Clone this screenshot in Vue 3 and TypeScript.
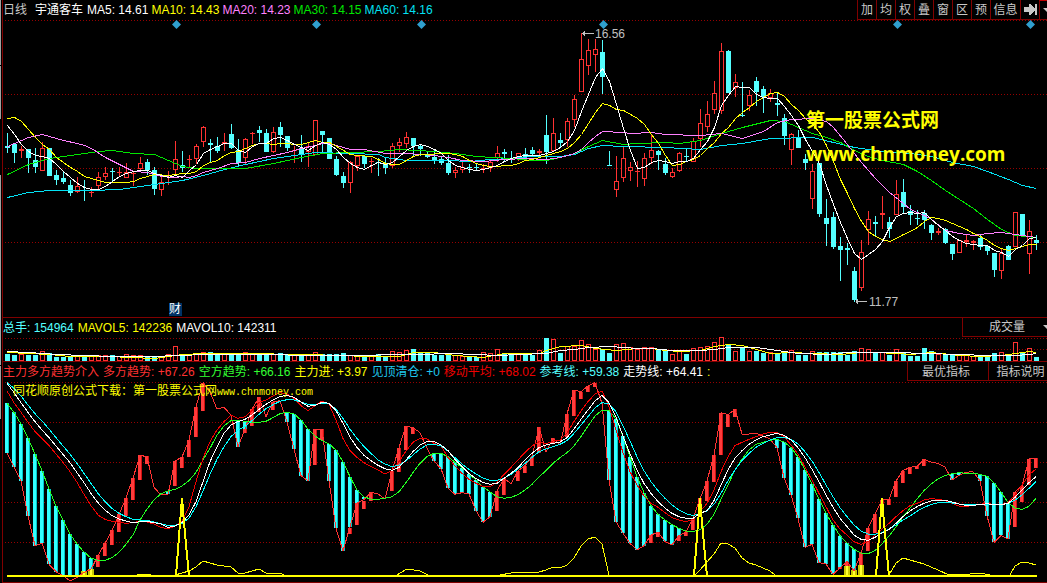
<script setup lang="ts">
type Candle = [kind: 0 | 1, high: number, top: number, bottom: number, low: number]
type Point = [number, number]

const STEP = 7
const WIDTH = 1047
const xAt = (i: number): number => STEP + STEP * i
const pct = (x: number): string => `${(x / WIDTH) * 100}%`

const tools: string[] = ['加', '均', '权', '叠', '窗', '区', '预', '信息']

const averages = [
  { label: 'MA5', value: '14.61', tone: 'white' },
  { label: 'MA10', value: '14.43', tone: 'yellow' },
  { label: 'MA20', value: '14.23', tone: 'violet' },
  { label: 'MA30', value: '14.15', tone: 'green' },
  { label: 'MA60', value: '14.16', tone: 'aqua' },
]

const indicatorReadings = [
  { label: '多方趋势', value: '+67.26', tone: 'red' },
  { label: '空方趋势', value: '+66.16', tone: 'lime' },
  { label: '主力进', value: '+3.97', tone: 'yellow' },
  { label: '见顶清仓', value: '+0', tone: 'sky' },
  { label: '移动平均', value: '+68.02', tone: 'crimson' },
  { label: '参考线', value: '+59.38', tone: 'cyan' },
  { label: '走势线', value: '+64.41', tone: 'white' },
]

/* 1 = rising (hollow red), 0 = falling (solid cyan); y values grow downwards */
const candles: Candle[] = [
  [0,133,146,148,153],[0,143,144,153,163],[1,146,149,151,158],[0,149,149,158,173],[0,148,160,167,173],
  [1,142,148,171,171],[0,148,148,176,176],[0,170,175,180,185],[0,172,178,182,184],[0,180,185,193,196],
  [1,177,186,192,193],[0,180,190,191,201],[1,187,192,193,197],[1,172,177,186,189],[1,167,173,177,180],
  [0,168,171,172,182],[1,167,172,173,177],[1,163,172,178,178],[1,171,173,174,186],[1,157,163,169,172],
  [0,159,162,170,175],[0,167,170,189,195],[1,177,182,190,196],[1,171,182,183,185],[1,141,159,170,175],
  [0,151,165,168,172],[1,155,159,160,168],[1,144,146,159,164],[1,126,127,142,147],[0,139,143,145,162],
  [0,137,146,151,153],[1,133,142,144,151],[0,124,134,148,149],[0,139,150,163,167],[1,138,139,158,164],
  [1,132,133,134,144],[0,126,130,133,142],[0,129,133,152,152],[1,127,132,152,153],[0,122,127,135,147],
  [0,136,136,148,151],[1,146,150,151,163],[0,135,148,154,162],[1,143,146,152,167],[1,120,120,155,155],
  [0,131,131,135,153],[0,138,138,159,159],[0,156,159,175,176],[0,172,176,183,188],[1,161,162,183,193],
  [1,155,156,166,171],[0,156,156,164,168],[1,158,161,162,173],[0,158,162,163,176],[0,158,163,168,174],
  [1,143,146,166,168],[1,138,142,146,152],[1,132,137,144,148],[0,138,138,146,156],[0,145,146,149,156],
  [0,152,155,157,158],[0,150,157,160,164],[0,157,159,163,165],[0,155,163,173,175],[1,167,170,173,178],
  [1,162,167,170,173],[0,164,167,168,173],[0,163,167,168,171],[1,164,168,169,173],[1,160,162,168,172],
  [1,146,153,158,162],[0,149,152,154,162],[0,151,158,159,163],[1,153,153,159,161],[0,148,154,157,160],
  [0,147,150,154,156],[1,149,151,153,155],[0,115,135,152,164],[1,118,133,151,152],[0,133,140,143,147],
  [1,118,121,140,147],[1,95,99,120,127],[1,33,59,92,92],[1,39,50,66,75],[1,39,49,55,72],
  [0,40,52,77,94],[0,151,165,166,166],[1,156,181,190,197],[1,147,158,178,182],[1,162,167,171,181],
  [1,161,171,172,187],[1,153,158,179,186],[1,135,150,158,164],[0,150,151,155,170],[0,158,164,173,175],
  [1,168,172,177,178],[1,152,153,171,172],[0,149,156,157,162],[1,138,141,162,162],[1,109,123,139,147],
  [1,101,114,127,132],[1,81,93,110,114],[1,43,51,111,114],[0,50,51,93,93],[1,74,82,88,97],
  [0,82,115,116,117],[1,90,95,106,111],[0,77,81,92,106],[0,86,89,97,113],[1,89,93,98,102],
  [0,93,103,105,116],[0,114,118,136,145],[1,133,134,150,165],[0,130,137,148,148],[0,154,159,163,170],
  [1,164,171,199,209],[0,163,163,214,217],[0,199,218,224,246],[0,212,217,247,249],[0,237,246,250,281],
  [0,243,248,250,265],[0,267,271,300,302],[1,240,252,288,291],[1,211,219,230,245],[0,216,222,224,237],
  [1,196,213,215,229],[0,217,222,229,238],[1,180,194,215,215],[0,179,192,207,214],[0,205,211,215,225],
  [0,210,218,219,225],[0,210,213,220,229],[0,224,225,233,240],[1,228,231,233,235],[0,228,229,243,244],
  [0,244,244,254,260],[1,240,240,253,253],[1,235,240,242,247],[1,240,241,243,250],[0,234,238,247,250],
  [0,245,246,251,255],[0,253,253,270,277],[1,249,253,271,279],[0,245,246,260,260],[1,212,212,247,247],
  [0,214,214,236,236],[1,220,231,254,274],[0,235,240,243,250],
]

const volumes: number[] = [
  7,6,6,6,6,9,8,4,4,5, 5,4,5,5,5,6,4,6,5,5, 5,5,4,6,14,5,6,6,8,9, 7,7,8,7,8,6,6,6,6,8,
  6,6,7,6,8,7,7,7,8,5, 5,6,4,7,5,9,8,10,12,9, 8,6,6,6,5,4,4,4,8,7, 11,7,6,6,6,6,10,23,21,8,
  14,14,20,16,11,12,8,16,17,13, 11,13,13,11,10,6,10,7,12,13, 14,18,23,16,9,14,9,10,8,8,
  7,9,10,6,6,9,9,9,9,9, 6,10,12,11,8,8,6,11,8,5, 5,13,10,6,6,7,5,5,4,6, 6,8,8,6,18,9,12,4,
]

const join = (pts: Point[]): string => pts.map((p) => p.join(',')).join(' ')

const ma5: number[] = [
  125,134,144,151,155,156,158,164,171,177,183,187,189,189,186,181,176,173,171,170,170,173,175,177,175,177,170,164,153,149,
  146,143,143,150,152,146,143,143,138,137,140,144,147,150,145,142,144,149,157,163,167,169,165,162,164,162,156,150,146,144,
  146,149,153,160,165,167,169,170,169,167,165,161,158,156,155,155,155,153,151,147,141,130,111,94,77,68,81,104,128,150,
  168,167,162,160,161,163,161,161,158,149,141,127,105,95,86,87,87,94,97,98,98,106,115,125,139,151,163,185,204,222,
  238,253,259,254,249,241,227,216,213,212,213,212,219,225,230,236,240,243,244,245,245,250,252,256,249,245,238,237,
]

const ma10: Point[] = [
  [7,118],[14,117],[21,121],[28,129],[35,137],[42,144],[49,149],[56,157],[63,162],[70,167],[77,171],[84,176],[91,178],[98,180],
  [105,182],[126,182],[133,181],[140,178],[147,176],[154,174],[168,175],[182,173],[189,173],[196,171],[203,165],[210,162],
  [217,160],[224,155],[231,152],[238,151],[245,148],[252,145],[259,143],[266,143],[273,144],[280,143],[301,144],[308,142],
  [315,140],[322,142],[329,142],[336,146],[343,150],[350,154],[357,155],[371,156],[378,159],[385,163],[392,164],[399,164],
  [406,160],[413,156],[420,154],[448,153],[455,154],[462,156],[469,160],[476,163],[483,165],[490,166],[511,165],[518,163],
  [525,160],[532,159],[546,155],[553,153],[560,151],[567,148],[574,142],[581,134],[588,123],[595,112],[602,103],[609,105],
  [616,109],[623,110],[630,114],[637,118],[644,124],[651,134],[658,143],[665,155],[672,165],[679,164],[686,161],[693,159],
  [700,155],[707,148],[714,142],[721,133],[728,127],[735,118],[742,112],[749,107],[756,101],[763,97],[770,93],[777,92],
  [784,96],[791,104],[798,110],[805,118],[812,124],[819,132],[826,145],[833,161],[840,179],[847,193],[854,208],[861,221],
  [868,231],[875,236],[882,239],[889,241],[896,238],[903,234],[910,231],[917,227],[924,221],[931,217],[938,218],[945,220],
  [952,223],[959,226],[966,229],[973,233],[980,236],[987,240],[994,245],[1001,248],[1008,250],[1015,248],[1022,246],[1029,244],[1036,244],
]

const ma20: Point[] = [
  [7,146],[21,140],[28,137],[42,134],[49,136],[63,140],[77,143],[84,145],[91,148],[105,157],[119,164],[133,171],[147,172],
  [161,176],[175,177],[182,176],[189,177],[196,175],[203,172],[217,168],[231,163],[245,162],[259,158],[273,155],[287,152],
  [301,148],[315,145],[322,143],[329,143],[336,145],[350,149],[364,149],[385,153],[406,153],[420,154],[434,155],[448,157],
  [462,160],[483,161],[504,159],[525,158],[546,159],[560,157],[574,153],[581,149],[588,142],[595,136],[602,131],[623,132],
  [630,133],[651,132],[665,134],[700,135],[721,133],[742,138],[763,131],[777,122],[791,119],[812,118],[826,121],[833,127],
  [847,144],[861,162],[875,178],[889,192],[903,203],[910,209],[924,215],[931,219],[945,230],[959,233],[973,235],[987,233],
  [1001,232],[1022,235],[1036,237],
]

const ma30: Point[] = [
  [7,174],[28,164],[49,158],[70,155],[98,151],[112,150],[133,153],[154,154],[168,160],[175,163],[182,166],[196,168],
  [245,168],[273,163],[301,157],[322,153],[350,152],[378,151],[399,149],[434,151],[455,153],[476,156],[511,158],[532,160],
  [546,160],[560,157],[574,153],[588,146],[602,140],[623,144],[637,143],[665,142],[679,143],[700,140],[721,133],[742,127],
  [770,120],[784,121],[798,127],[812,133],[826,137],[840,142],[854,150],[868,156],[882,160],[903,164],[917,171],[931,180],
  [945,190],[959,199],[973,208],[987,219],[1001,229],[1015,235],[1036,237],
]

const ma60: Point[] = [
  [7,197],[28,192],[49,190],[91,190],[119,189],[140,186],[161,183],[182,180],[203,175],[224,169],[245,164],[273,158],
  [294,155],[315,152],[350,153],[378,154],[385,157],[406,160],[448,160],[469,161],[490,159],[511,158],[532,156],[560,156],
  [574,154],[588,148],[602,145],[623,146],[665,147],[700,149],[721,145],[742,143],[770,138],[812,137],[833,142],[854,147],
  [882,151],[910,153],[931,156],[952,162],[973,166],[987,171],[1008,179],[1022,185],[1036,188],
]

const mavol5: Point[] = [
  [7,352],[28,353],[49,354],[70,356],[108,356],[154,358],[168,356],[182,354],[203,353],[245,353],[301,354],[343,355],[364,356],
  [399,356],[413,352],[434,352],[455,355],[483,357],[504,353],[539,353],[546,350],[560,346],[581,345],[595,348],[616,350],
  [637,348],[651,348],[665,350],[679,351],[700,350],[714,346],[728,344],[742,345],[756,349],[770,353],[791,352],[812,353],
  [840,354],[861,352],[875,352],[896,353],[910,354],[931,352],[959,355],[980,356],[1001,355],[1015,353],[1029,351],[1036,352],
]

const mavol10: Point[] = [
  [7,351],[28,352],[42,353],[56,354],[84,355],[112,356],[154,356],[175,355],[210,354],[364,355],[392,354],[420,354],[448,353],
  [476,354],[497,355],[518,354],[546,353],[560,350],[574,349],[588,347],[609,346],[637,348],[651,348],[672,350],[700,350],
  [714,349],[728,347],[756,347],[777,350],[798,353],[826,354],[847,352],[896,352],[924,353],[959,354],[987,355],[1015,355],[1029,354],[1036,353],
]

/* Oscillator samples are stored at a third of a chart unit, measured from the panel's top */
const LEVEL = 3
const trendFast: number[] = [
  220,260,302,408,497,490,553,575,587,603,592,577,568,527,490,452,403,354,294,226,230,322,345,343,243,231,180,80,8,36,
  87,82,105,200,148,88,52,110,65,62,127,207,287,302,147,150,302,445,513,440,370,358,337,342,357,272,203,138,143,158,
  205,243,266,325,343,338,342,392,427,410,333,295,311,273,257,230,142,215,175,195,102,30,35,18,8,70,300,425,460,490,
  510,497,465,457,484,495,467,455,415,357,303,225,98,104,88,162,162,160,168,177,203,293,345,415,502,493,548,552,583,564,
  545,572,520,445,403,360,358,303,272,262,259,238,246,250,261,300,286,277,275,302,407,487,466,477,335,318,237,234,
]
const trendSlow: number[] = [
  70,97,132,175,222,272,327,378,420,462,492,516,534,541,541,533,517,493,465,420,387,360,341,333,328,318,302,277,240,205,
  165,138,122,121,124,127,127,124,113,101,97,102,120,147,168,182,192,210,246,290,330,351,357,358,355,350,335,308,278,250,
  230,220,220,230,247,263,281,300,320,336,350,355,352,344,330,313,291,272,250,233,218,198,170,138,108,91,91,117,168,230,
  290,338,377,403,420,434,445,453,455,449,433,403,358,315,270,237,210,193,187,181,178,186,203,231,270,312,357,400,435,467,
  489,508,519,521,512,492,468,441,410,385,357,332,312,297,287,281,278,280,280,283,289,309,336,368,384,388,379,355,
]
const driftLine: number[] = [
  10,38,68,97,125,150,173,198,223,248,278,308,340,368,390,407,417,423,428,425,424,428,432,442,438,428,405,365,305,245,
  200,160,135,125,118,105,88,73,60,50,46,52,66,79,76,67,70,92,130,172,202,226,242,256,266,271,262,240,215,195,
  185,184,195,212,238,260,280,296,307,313,310,295,280,263,240,220,203,195,190,186,173,147,118,90,63,46,68,112,168,222,
  270,310,340,365,384,400,410,415,415,400,392,362,315,270,235,212,193,180,170,165,160,166,180,203,233,268,305,345,382,415,
  440,465,478,481,472,459,448,430,410,393,380,370,363,361,361,366,372,376,376,374,371,374,374,370,352,330,308,290,
]
const meanLine: number[] = [
  33,68,97,127,155,175,197,222,247,275,307,343,377,405,418,424,427,430,428,424,426,432,442,447,438,423,380,305,235,185,
  150,125,105,115,110,92,67,60,48,38,42,55,77,92,77,63,72,120,175,212,232,248,260,270,282,272,245,213,187,175,
  177,190,198,232,258,280,298,310,319,320,307,283,262,240,217,198,185,192,183,180,160,125,93,65,42,33,80,150,218,275,
  315,348,370,382,398,413,420,425,418,395,370,330,275,230,197,187,178,170,162,157,157,170,195,222,262,300,340,380,420,447,
  465,485,493,485,465,447,430,410,392,377,370,360,356,358,362,370,378,380,376,373,370,374,374,368,345,315,285,267,
]
const referenceLine: number[] = [
  8,25,48,75,101,123,147,173,198,222,250,280,310,340,365,385,400,410,418,420,421,426,431,437,436,430,415,380,333,283,
  238,200,170,150,140,122,103,86,74,64,59,60,66,73,74,70,72,87,115,148,175,200,220,240,252,260,255,243,225,207,
  195,193,198,213,233,252,268,282,294,301,301,295,283,267,250,232,215,207,200,193,182,160,135,110,84,68,72,95,137,183,
  230,272,305,332,355,375,390,401,407,400,393,373,340,302,270,242,220,202,190,180,173,172,178,192,215,243,277,315,350,383,
  410,435,453,462,463,458,448,435,420,408,394,382,374,368,367,369,372,374,374,374,373,374,373,371,360,345,325,304,
]

const redBars: [number, number, number][] = [
  [13,525,560],[14,489,528],[15,450,495],[16,402,455],[17,354,408],[18,294,360],[19,226,299],[20,228,252],[24,243,318],
  [25,231,263],[26,180,230],[27,80,172],[28,8,93],[34,148,160],[35,88,137],[36,52,96],[38,65,90],[44,146,255],[45,148,180],
  [49,445,463],[50,370,435],[51,362,387],[52,337,362],[55,272,333],[56,203,275],[57,138,210],[58,143,162],[70,333,392],
  [71,295,345],[73,273,302],[74,257,278],[75,230,257],[76,142,220],[78,175,190],[80,102,172],[81,30,108],[82,35,57],
  [83,18,36],[84,8,20],[92,465,488],[93,457,470],[96,467,483],[97,455,467],[98,415,450],[99,355,412],[100,303,363],[101,225,305],
  [102,98,225],[103,104,140],[104,88,110],[119,560,566],[120,545,557],[122,520,555],[123,445,512],[124,403,459],[125,360,405],
  [126,358,375],[127,303,350],[128,272,310],[129,262,282],[130,259,267],[131,238,258],[144,335,440],[145,318,366],[146,237,315],[147,234,264],
]
const blueBars = trendFast
  .map((v, i) => ({ i, top: trendSlow[i], bottom: Math.min(v, 586) }))
  .filter((b) => b.bottom - b.top > 2)
const goldBars: [number, number, number][] = [[11,573,586],[12,568,586],[120,557,586],[121,570,586],[122,555,586]]

const signalPeaks = [182, 700, 882]
const capitalFlow: Point[] = [
  [7,575],[137,575],[140,574],[147,574],[151,575],[175,575],[189,571],[196,567],[203,561],[210,563],[217,565],[224,566],[231,567],
  [238,573],[245,573],[252,571],[259,569],[266,573],[280,573],[284,575],[397,575],[407,569],[420,571],[428,575],[500,575],[511,573],
  [518,572],[539,572],[546,570],[553,567],[560,568],[567,565],[574,558],[581,546],[588,539],[595,537],[602,544],[609,575],[695,575],
  [700,570],[707,562],[714,554],[721,543],[728,544],[735,548],[742,558],[749,563],[756,565],[763,568],[770,571],[775,575],[889,575],
  [896,563],[903,558],[910,560],[924,564],[938,570],[949,575],[970,574],[980,573],[990,575],[1010,575],[1015,566],[1022,562],[1029,563],[1036,565],
]

const series = (values: number[], scale = 1, origin = 0): string =>
  values.map((v, i) => `${xAt(i)},${origin + v / scale}`).join(' ')
const level = (v: number): number => Math.round(380 + v / LEVEL)

const events = [176, 316, 421, 603, 897, 1030]
const diamond = (x: number): string => `${x - 4},24.5 ${x + 0.5},20 ${x + 5},24.5 ${x + 0.5},29`
</script>

<template>
  <main class="terminal">
    <div class="rail" aria-hidden="true"><i class="r1"></i><i class="r2"></i><i class="r3"></i><i class="r4"></i><i class="r5"></i></div>

    <section class="panel price">
      <header class="bar">
        <div class="readings">
          <span class="silver period">日线</span>
          <span class="white stock">宇通客车</span>
          <span v-for="m in averages" :key="m.label" :class="m.tone">{{ m.label }}: {{ m.value }}</span>
        </div>
        <nav class="tools">
          <button v-for="t in tools" :key="t" type="button">{{ t }}</button>
          <button type="button" aria-label="Jump to latest" class="jump">
            <svg width="13" height="13" viewBox="0 0 13 13" shape-rendering="crispEdges"><path d="M0 4H5V1H6L11 6V7L6 12H5V9H0ZM11 1H13V12H11Z" fill="#c8c8c8" /></svg>
          </button>
          <button type="button" aria-label="More" class="more"><i class="caret"></i></button>
        </nav>
      </header>
      <div class="plot">
        <svg viewBox="0 20 1047 297" preserveAspectRatio="none" shape-rendering="crispEdges">
          <line v-for="y in [20, 94, 168, 242]" :key="y" class="grid" x1="5" x2="1047" :y1="y + 0.5" :y2="y + 0.5" />
          <g v-for="(c, i) in candles" :key="i">
            <template v-if="c[0] === 1">
              <rect class="up" :x="xAt(i)" :y="c[1]" width="1" :height="Math.max(c[2] - c[1], 0)" />
              <rect class="up" :x="xAt(i)" :y="c[3]" width="1" :height="Math.max(c[4] - c[3], 0)" />
              <rect v-if="c[3] - c[2] > 2" class="hollow" :x="xAt(i) - 1.5" :y="c[2] + 0.5" width="4" :height="c[3] - c[2] - 1" />
              <rect v-else class="up" :x="xAt(i) - 2" :y="c[2]" width="5" :height="c[3] - c[2]" />
            </template>
            <template v-else>
              <rect class="down" :x="xAt(i)" :y="c[1]" width="1" :height="c[4] - c[1]" />
              <rect class="down" :x="xAt(i) - 2" :y="c[2]" width="5" :height="c[3] - c[2]" />
            </template>
          </g>
          <g class="lines" transform="translate(0.5 0.5)">
            <polyline class="s-aqua" :points="join(ma60)" />
            <polyline class="s-green" :points="join(ma30)" />
            <polyline class="s-violet" :points="join(ma20)" />
            <polyline class="s-yellow" :points="join(ma10)" />
            <polyline class="s-white" :points="series(ma5)" />
          </g>
          <path class="pointer" d="M582 33.500H594M584.500 31V36M583.500 32V35M856 301.500H867M857.500 299V304M856.500 300V303" />
          <polygon v-for="x in events" :key="x" class="event" shape-rendering="auto" :points="diamond(x)" />
        </svg>
        <span class="mark high" :style="{ left: pct(595) }">16.56</span>
        <span class="mark low" :style="{ left: pct(869) }">11.77</span>
        <span class="badge" :style="{ left: pct(169) }">财</span>
        <p class="brand" :style="{ left: pct(806) }">第一股票公式网<br />www.chnmoney.com</p>
      </div>
    </section>

    <section class="panel volume">
      <header class="bar">
        <div class="readings">
          <span class="cyan">总手: 154964</span>
          <span class="yellow">MAVOL5: 142236</span>
          <span class="white">MAVOL10: 142311</span>
        </div>
        <button type="button" class="chooser">成交量<i class="caret"></i></button>
      </header>
      <div class="plot">
        <svg viewBox="0 337 1047 24" preserveAspectRatio="none" shape-rendering="crispEdges">
          <line v-for="y in [338, 349]" :key="y" class="grid" x1="5" x2="1047" :y1="y + 0.5" :y2="y + 0.5" />
          <template v-for="(h, i) in volumes" :key="i">
            <rect v-if="candles[i][0] === 1" class="hollow" :x="xAt(i) - 1.5" :y="361 - h - 0.5" width="4" :height="h" />
            <rect v-else class="down" :x="xAt(i) - 2" :y="361 - h" width="5" :height="h" />
          </template>
          <g class="lines" transform="translate(0.5 0.5)">
            <polyline class="s-yellow" :points="join(mavol5)" />
            <polyline class="s-white" :points="join(mavol10)" />
          </g>
        </svg>
      </div>
    </section>

    <section class="panel indicator">
      <header class="bar">
        <div class="readings">
          <span class="red">主力多方趋势介入</span>
          <span v-for="r in indicatorReadings" :key="r.label" :class="r.tone">{{ r.label }}: {{ r.value }}</span>
          <span class="yellow">:</span>
        </div>
        <nav class="links">
          <button type="button">最优指标</button>
          <button type="button">指标说明</button>
        </nav>
      </header>
      <div class="plot">
        <svg viewBox="0 381 1047 201" preserveAspectRatio="none" shape-rendering="crispEdges">
          <line v-for="y in [382, 422, 462, 502, 542]" :key="y" class="grid" x1="5" x2="1047" :y1="y + 0.5" :y2="y + 0.5" />
          <g v-for="b in blueBars" :key="'b' + b.i">
            <rect class="bar-cyan" :x="xAt(b.i) - 2" :y="level(b.top)" width="3" :height="level(b.bottom) - level(b.top)" />
            <rect class="bar-cyan-edge" :x="xAt(b.i) + 1" :y="level(b.top)" width="1" :height="level(b.bottom) - level(b.top)" />
          </g>
          <g v-for="b in goldBars" :key="'y' + b[0]">
            <rect class="bar-gold-edge" :x="xAt(b[0]) - 3" :y="level(b[1])" width="6" :height="level(b[2]) - level(b[1])" />
            <rect class="bar-gold" :x="xAt(b[0]) - 1" :y="level(b[1])" width="2" :height="level(b[2]) - level(b[1])" />
          </g>
          <g v-for="b in redBars" :key="'r' + b[0]">
            <rect class="bar-red" :x="xAt(b[0]) - 2" :y="level(b[1])" width="3" :height="level(b[2]) - level(b[1])" />
            <rect class="bar-red-edge" :x="xAt(b[0]) + 1" :y="level(b[1])" width="1" :height="level(b[2]) - level(b[1])" />
          </g>
          <g class="lines">
            <polyline class="s-red" :points="series(trendFast, LEVEL, 380)" />
            <polyline class="s-lime" :points="series(trendSlow, LEVEL, 380)" />
            <polyline class="s-crimson" :points="series(meanLine, LEVEL, 380)" />
            <polyline class="s-cyan" :points="series(referenceLine, LEVEL, 380)" />
            <polyline class="s-white" :points="series(driftLine, LEVEL, 380)" />
            <polyline class="s-yellow" :points="join(capitalFlow)" />
          </g>
          <rect class="gold" x="7" y="575" width="1030" height="2" />
          <polyline
            v-for="x in signalPeaks" :key="x" class="peak"
            :points="`${x - 6},576 ${x - 2},523 ${x},498 ${x + 2},523 ${x + 7},576`"
          />
        </svg>
        <p class="source" :style="{ left: pct(13) }">同花顺原创公式下载：第一股票公式网<span>www.chnmoney.com</span></p>
      </div>
    </section>
  </main>
</template>

<style>
html,
body {
  background: #000;
}
</style>

<style scoped>
.terminal {
  position: relative;
  display: grid;
  grid-template-rows: 317fr 44fr 222fr;
  height: 100vh;
  min-height: 400px;
  overflow: hidden;
  background: #000;
  color: #fff;
  font: 12px/14px "Liberation Sans", "Noto Sans CJK SC", sans-serif;
}

.rail {
  position: absolute;
  inset: 0 auto 0 0;
  width: 3px;
  display: grid;
  grid-template-rows: 65fr 53fr 54fr 191fr 53fr 163fr;
  gap: 1px;
  box-sizing: border-box;
  border-right: 1px solid #800000;
}
.rail i {
  width: 1px;
  background: #a0a0a0;
}
.rail .r3 {
  background: #000;
}

.panel {
  display: flex;
  flex-direction: column;
  min-height: 0;
  box-sizing: border-box;
}
.volume,
.indicator {
  border-top: 1px solid #800000;
  margin-left: 2px;
}
.volume .bar,
.volume .plot,
.indicator .bar,
.indicator .plot {
  margin-left: -2px;
}
.indicator {
  border-bottom: 1px solid #800000;
}

.bar {
  flex: none;
  display: flex;
  justify-content: space-between;
  height: 20px;
}
.volume .bar,
.indicator .bar {
  height: 19px;
}
.readings {
  display: flex;
  align-items: center;
  gap: 4px;
  padding-left: 3px;
  white-space: nowrap;
}
.price .readings {
  gap: 3px;
}
.indicator .readings {
  padding-top: 1px;
}
.period {
  margin-right: 5px;
}
.stock {
  margin-right: 1px;
}

button {
  box-sizing: border-box;
  margin: 0;
  padding: 0;
  border: 0 solid #800000;
  border-width: 0 0 1px 1px;
  background: #000;
  color: #c8c8c8;
  font: inherit;
  cursor: pointer;
}
.tools {
  display: flex;
}
.tools button {
  display: flex;
  align-items: center;
  justify-content: center;
  width: 19px;
}
.tools button:nth-child(8) {
  width: 30px;
}
.tools .more {
  width: 8px;
  border-top: 1px solid #c00000;
  overflow: hidden;
  justify-content: flex-start;
  padding-left: 3px;
}
.caret {
  flex: none;
  border: 4px solid transparent;
  border-top-color: #c8c8c8;
  border-bottom-width: 0;
}
.chooser {
  display: flex;
  align-items: center;
  justify-content: flex-end;
  gap: 18px;
  width: 85px;
  overflow: hidden;
}
.chooser .caret {
  margin-right: -4px;
}
.links {
  display: flex;
}
.links button {
  width: 81px;
  padding: 2px 4px 0 0;
}
.links button + button {
  width: 59px;
  padding: 2px 0 0 5px;
}

.plot {
  position: relative;
  flex: 1;
  min-height: 0;
}
.plot svg {
  display: block;
  width: 100%;
  height: 100%;
}
.grid {
  stroke: #960000;
  stroke-dasharray: 1 2;
}
.up {
  fill: #ff3232;
}
.down {
  fill: #54ffff;
}
.hollow {
  fill: #000;
  stroke: #ff3232;
}
.lines polyline {
  fill: none;
  stroke-width: 1;
}
.s-white { stroke: #fff; }
.s-yellow { stroke: #ff0; }
.s-violet { stroke: #ff80ff; }
.s-green { stroke: #00e600; }
.s-aqua { stroke: #02e2f4; }
.s-cyan { stroke: #0ff; }
.s-lime { stroke: #2f2; }
.s-red { stroke: #ff3232; }
.s-crimson { stroke: #f00000; }
.pointer {
  fill: none;
  stroke: #c0c0c0;
}
.event {
  fill: #309fce;
}
.bar-cyan { fill: #3ff; }
.bar-cyan-edge { fill: #00c8c8; }
.bar-red { fill: #ff3c3c; }
.bar-red-edge { fill: #d01010; }
.bar-gold { fill: #ff3; }
.bar-gold-edge { fill: #c8c800; }
.gold {
  fill: #ff0;
}
.peak {
  fill: none;
  stroke: #ff0;
  stroke-width: 2;
}

.mark,
.badge,
.brand,
.source {
  position: absolute;
  margin: 0;
  white-space: nowrap;
}
.mark {
  color: #c0c0c0;
}
.high {
  top: 7px;
}
.low {
  bottom: 8px;
}
.badge {
  bottom: 1px;
  width: 13px;
  line-height: 13px;
  background: #003366;
}
.brand {
  top: 83px;
  color: #ff0;
  font: bold 19px/34px "Open Sans", "Noto Sans CJK SC", sans-serif;
}
.source {
  top: 3px;
  color: #ff0;
}
.source span {
  font-family: "Liberation Mono", monospace;
  font-size: 10px;
}

.silver { color: #c8c8c8; }
.white { color: #fff; }
.yellow { color: #ff0; }
.violet { color: #ff80ff; }
.green { color: #00e600; }
.aqua { color: #02e2f4; }
.cyan { color: #54ffff; }
.sky { color: #1fc8ee; }
.red { color: #ff3232; }
.crimson { color: #f00000; }
.lime { color: #3f3; }
</style>
